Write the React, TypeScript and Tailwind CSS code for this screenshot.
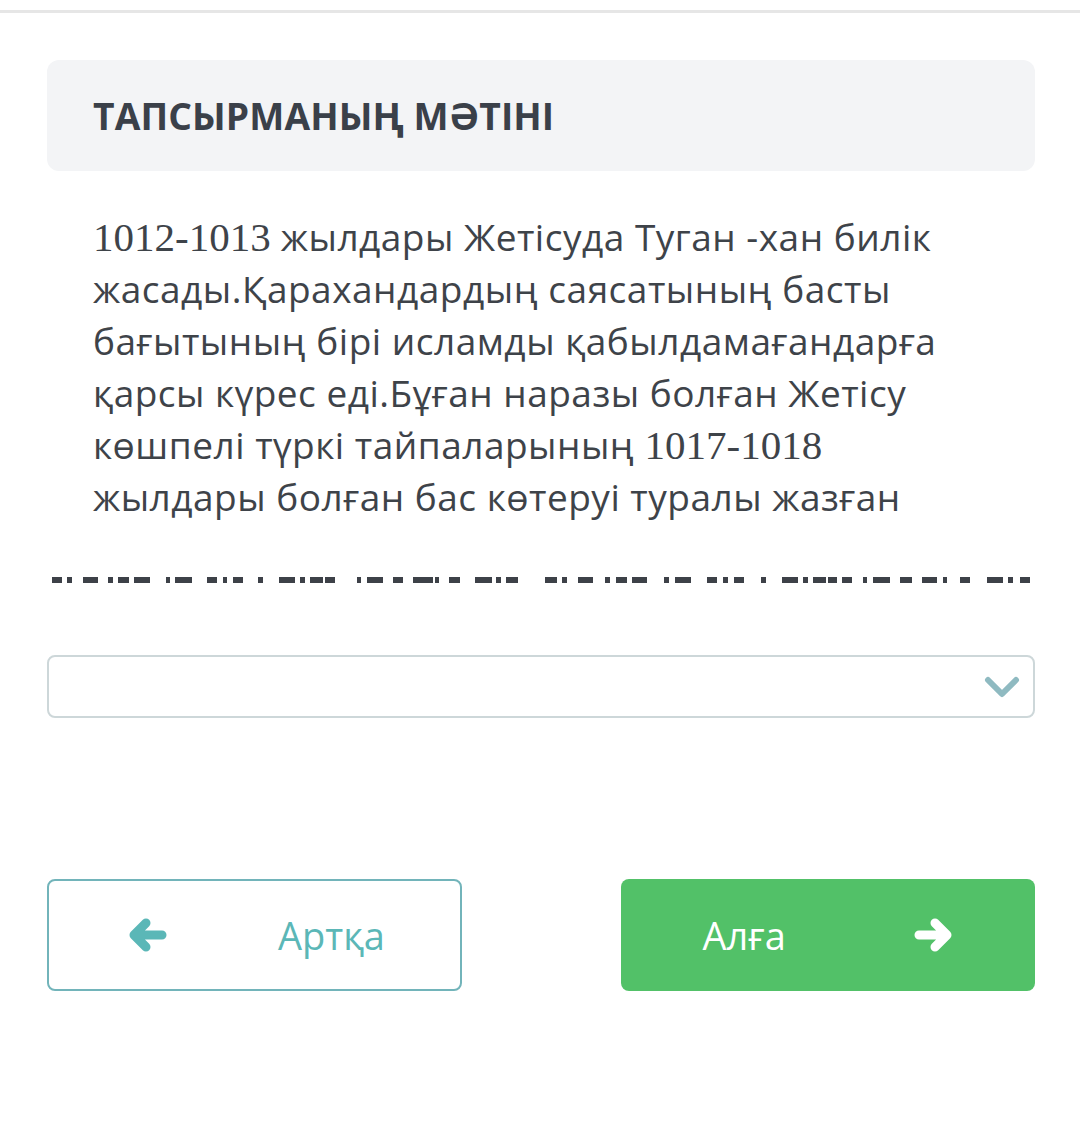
// redacted answer line, measured as [x, width] in page pixels
const dashes: [number, number][] = [
  [52, 10], [67, 5], [83, 15], [108, 5], [118, 11], [134, 16], [166, 4], [175, 17],
  [207, 10], [223, 4], [233, 10], [258, 5], [279, 16], [300, 5], [310, 13], [325, 10],
  [357, 4], [367, 16], [393, 10], [413, 20], [435, 4], [449, 11], [475, 17], [496, 5],
  [506, 12],
  [545, 12], [562, 5], [578, 15], [605, 5], [616, 11], [632, 15], [664, 5], [675, 16],
  [707, 10], [723, 5], [734, 10], [761, 5], [782, 16], [803, 5], [813, 13], [828, 9],
  [842, 10], [863, 4], [873, 17], [900, 12], [922, 15], [943, 4], [960, 10], [987, 16],
  [1008, 5], [1020, 10],
];

const num = "font-['Liberation_Serif',serif] text-[41px] tracking-normal";

const lines = [
  <>
    <span className={num}>1012-1013</span> жылдары Жетісуда Туган -хан билік
  </>,
  <>жасады.Қарахандардың саясатының басты</>,
  <>бағытының бірі исламды қабылдамағандарға</>,
  <>қарсы күрес еді.Бұған наразы болған Жетісу</>,
  <>
    көшпелі түркі тайпаларының <span className={num}>1017-1018</span>
  </>,
  <>жылдары болған бас көтеруі туралы жазған</>,
];

function AnswerLine() {
  return (
    <svg width="988" height="8" viewBox="47 579 988 8" className="block">
      {dashes.map(([x, w]) => (
        <rect key={x} x={x} y={580} width={w} height={6} fill="#3d4148" />
      ))}
    </svg>
  );
}

function Arrow({ dir, color }: { dir: "left" | "right"; color: string }) {
  return (
    <svg
      width="40"
      height="34"
      viewBox="0 0 40 34"
      fill="none"
      className={dir === "right" ? "-scale-x-100" : ""}
    >
      <path
        d="M35 17 H8 M19 5 L7 17 L19 29"
        stroke={color}
        strokeWidth="9"
        strokeLinecap="round"
        strokeLinejoin="round"
      />
    </svg>
  );
}

export default function App() {
  return (
    <div className="min-h-[1123px] bg-white font-['Open_Sans',sans-serif]">
      <div className="h-[10px]" />
      <div className="h-[3px] bg-[#e6e6e6]" />

      <div className="pl-[47px] pr-[45px] pt-[47px]">
        <div className="flex h-[111px] items-center rounded-[12px] bg-[#f3f4f6] pl-[46px]">
          <h1 className="text-[37.2px] font-bold tracking-[0.1px] text-[#3a4049]">
            ТАПСЫРМАНЫҢ МӘТІНІ
          </h1>
        </div>

        <div className="mt-[40px] pl-[46px] text-[37px] leading-[52px] tracking-[0.5px] text-[#3e4349]">
          {lines.map((l, i) => (
            <p key={i} className="whitespace-nowrap">
              {l}
            </p>
          ))}
        </div>

        <div className="mt-[53px]">
          <AnswerLine />
        </div>

        <div className="mt-[71px] flex h-[63px] items-center justify-end rounded-[8px] border-2 border-[#cdd7d9] pr-[13px]">
          <svg width="36" height="24" viewBox="0 0 36 24" fill="none">
            <path
              d="M4 5 L18 19 L32 5"
              stroke="#8fbac1"
              strokeWidth="6"
              strokeLinecap="round"
              strokeLinejoin="round"
            />
          </svg>
        </div>

        <div className="mt-[161px] grid grid-cols-2 gap-[159px]">
          <button className="flex h-[112px] items-center rounded-[8px] border-2 border-[#72b4ba] bg-white pl-[78px] text-[#5bb7b7]">
            <Arrow dir="left" color="#5bb7b7" />
            <span className="ml-[111px] text-[38px]">Артқа</span>
          </button>
          <button className="flex h-[112px] items-center rounded-[8px] bg-[#52c168] pl-[82px] text-white">
            <span className="text-[38px]">Алға</span>
            <span className="ml-[128px]">
              <Arrow dir="right" color="#ffffff" />
            </span>
          </button>
        </div>
      </div>
    </div>
  );
}
